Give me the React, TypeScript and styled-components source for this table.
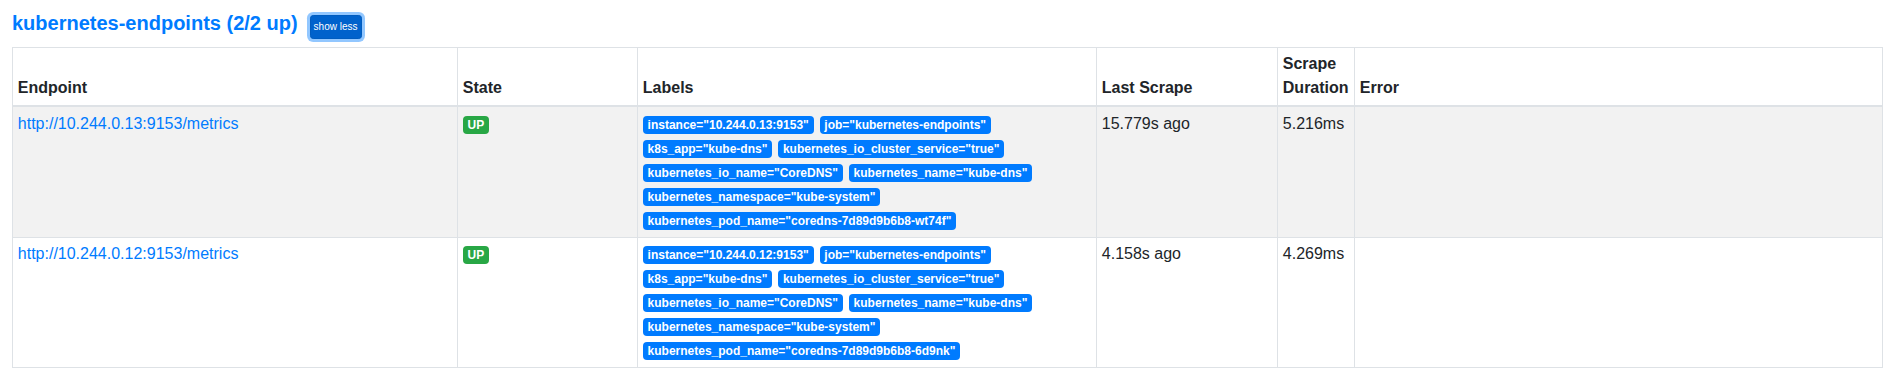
import * as React from 'react';
import styled, { createGlobalStyle } from 'styled-components';

const GlobalStyle = createGlobalStyle`
    *, *::before, *::after {
        box-sizing: border-box;
    }
    body {
        margin: 0;
        background: #fff;
        color: #212529;
        font-family: "Liberation Sans", Arial, sans-serif;
        font-size: 16px;
        line-height: 1.5;
    }
`

type Target = {
    endpoint: string;
    state: string;
    labels: string[];
    lastScrape: string;
    duration: string;
    error: string;
}

const targets: Target[] = [
    {
        endpoint: 'http://10.244.0.13:9153/metrics',
        state: 'UP',
        labels: [
            'instance="10.244.0.13:9153"',
            'job="kubernetes-endpoints"',
            'k8s_app="kube-dns"',
            'kubernetes_io_cluster_service="true"',
            'kubernetes_io_name="CoreDNS"',
            'kubernetes_name="kube-dns"',
            'kubernetes_namespace="kube-system"',
            'kubernetes_pod_name="coredns-7d89d9b6b8-wt74f"',
        ],
        lastScrape: '15.779s ago',
        duration: '5.216ms',
        error: '',
    },
    {
        endpoint: 'http://10.244.0.12:9153/metrics',
        state: 'UP',
        labels: [
            'instance="10.244.0.12:9153"',
            'job="kubernetes-endpoints"',
            'k8s_app="kube-dns"',
            'kubernetes_io_cluster_service="true"',
            'kubernetes_io_name="CoreDNS"',
            'kubernetes_name="kube-dns"',
            'kubernetes_namespace="kube-system"',
            'kubernetes_pod_name="coredns-7d89d9b6b8-6d9nk"',
        ],
        lastScrape: '4.158s ago',
        duration: '4.269ms',
        error: '',
    },
]

const columns = [
    { title: 'Endpoint', width: 445 },
    { title: 'State', width: 180 },
    { title: 'Labels', width: 459 },
    { title: 'Last Scrape', width: 181 },
    { title: 'Scrape Duration', width: 77 },
    { title: 'Error', width: 528 },
]

export default function App() {
    return (
        <Page>
            <GlobalStyle />
            <PoolHeader>
                <PoolTitle href="#pool-kubernetes-endpoints">kubernetes-endpoints (2/2 up)</PoolTitle>
                <ToggleButton>show less</ToggleButton>
            </PoolHeader>

            <TargetTable>
                <thead>
                    <tr>
                        {columns.map(c => (
                            <HeadCell key={c.title} $w={c.width}>{c.title}</HeadCell>
                        ))}
                    </tr>
                </thead>
                <tbody>
                    {targets.map(t => (
                        <BodyRow key={t.endpoint}>
                            <Cell><EndpointLink href={t.endpoint}>{t.endpoint}</EndpointLink></Cell>
                            <Cell><Badge $tone="success">{t.state}</Badge></Cell>
                            <Cell>
                                {t.labels.map(l => (
                                    <React.Fragment key={l}>
                                        <Badge $tone="primary">{l}</Badge>{' '}
                                    </React.Fragment>
                                ))}
                            </Cell>
                            <Cell>{t.lastScrape}</Cell>
                            <Cell>{t.duration}</Cell>
                            <Cell>{t.error}</Cell>
                        </BodyRow>
                    ))}
                </tbody>
            </TargetTable>
        </Page>
    )
}

const Page = styled.div`
    padding: 11px 13px 0 12px;
`
const PoolHeader = styled.div`
    display: flex;
    align-items: baseline;
    gap: 12px;
    margin-bottom: 8px;
`
const PoolTitle = styled.a`
    font-size: 20px;
    line-height: 24px;
    font-weight: 700;
    color: #007bff;
    text-decoration: none;
`
const ToggleButton = styled.button`
    font-family: "Liberation Sans", Arial, sans-serif;
    font-size: 10px;
    line-height: 15px;
    padding: 3.5px 3px;
    color: #fff;
    background: #0062cc;
    border: 1px solid #005cbf;
    border-radius: 3.2px;
    box-shadow: 0 0 0 3px rgba(38, 143, 255, 0.5);
    cursor: pointer;
`
const TargetTable = styled.table`
    width: 1870px;
    table-layout: fixed;
    border-collapse: collapse;
    border: 1px solid #dee2e6;
`
const HeadCell = styled.th<{ $w: number }>`
    width: ${p => p.$w}px;
    padding: 4.8px;
    text-align: left;
    vertical-align: bottom;
    font-weight: 700;
    border: 1px solid #dee2e6;
    border-bottom: 2px solid #dee2e6;
`
const BodyRow = styled.tr`
    &:nth-of-type(odd) {
        background: #f2f2f2;
    }
`
const Cell = styled.td`
    padding: 4.8px;
    vertical-align: top;
    border: 1px solid #dee2e6;
`
const EndpointLink = styled.a`
    color: #007bff;
    text-decoration: none;
`
const Badge = styled.span<{ $tone: 'primary' | 'success' }>`
    display: inline-block;
    padding: 3px 4.8px;
    font-size: 12px;
    font-weight: 700;
    line-height: 1;
    color: #fff;
    white-space: nowrap;
    vertical-align: baseline;
    border-radius: 4px;
    margin-right: 1.5px;
    background: ${p => (p.$tone === 'success' ? '#28a745' : '#007bff')};
`
